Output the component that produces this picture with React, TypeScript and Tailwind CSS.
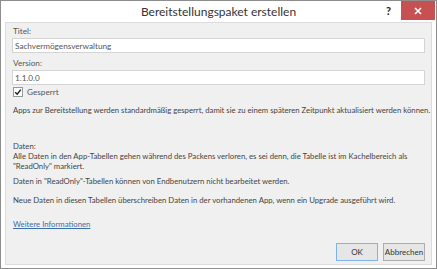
import React from 'react';

const font = { fontFamily: 'Lato, "Open Sans", Arial, sans-serif' };

export default function App() {
  return (
    <div
      className="w-[437px] h-[269px] bg-white border border-[#8d8d8d] flex flex-col text-[#444] overflow-hidden"
      style={font}
    >
      {/* title bar */}
      <div className="relative h-[21px] flex items-center justify-center shrink-0">
        <span className="text-[12px] text-[#333]">Bereitstellungspaket erstellen</span>
        <span className="absolute left-[385px] top-[2px] text-[11px] font-bold text-[#222]">?</span>
        <div className="absolute left-[400px] top-0 w-[34px] h-[19px] bg-[#c75050] flex items-center justify-center">
          <svg width="8" height="8" viewBox="0 0 8 8">
            <path d="M1 1L7 7M7 1L1 7" stroke="white" strokeWidth="1.6" />
          </svg>
        </div>
      </div>

      {/* content */}
      <div className="mx-[4px] mb-[3px] flex-1 min-h-0 border border-[#dcdcdc] bg-[#f0f0f0] px-[6px] flex flex-col text-[7.75px] leading-[10px] whitespace-nowrap">
        <div className="mt-[3px] ml-[1px] text-[#555] text-[8.2px]">Titel:</div>
        <div className="mt-[2px] h-[15px] bg-white border border-[#d4d4d4] flex items-center px-[2px] text-[#555] text-[8.2px]">
          Sachvermögensverwaltung
        </div>
        <div className="mt-[5px] ml-[1px] text-[#555] text-[8.2px]">Version:</div>
        <div className="mt-[2px] h-[15px] bg-white border border-[#d4d4d4] flex items-center px-[2px] text-[#555] text-[8.2px]">
          1.1.0.0
        </div>
        <div className="mt-[2px] flex items-center gap-[4px] ml-[1px]">
          <div className="w-[10px] h-[10px] border border-[#999] bg-white flex items-center justify-center">
            <svg width="8" height="8" viewBox="0 0 8 8">
              <path d="M1.2 4.2L3.2 6.2L6.8 1.6" stroke="#222" strokeWidth="1.5" fill="none" />
            </svg>
          </div>
          <span className="text-[#555] text-[8.2px]">Gesperrt</span>
        </div>
        <p className="mt-[8px] ml-[1px]">
          Apps zur Bereitstellung werden standardmäßig gesperrt, damit sie zu einem späteren Zeitpunkt aktualisiert werden können.
        </p>
        <p className="mt-[26px] ml-[1px]">Daten:</p>
        <p className="ml-[1px]">
          Alle Daten in den App-Tabellen gehen während des Packens verloren, es sei denn, die Tabelle ist im Kachelbereich als
          <br />
          "ReadOnly" markiert.
        </p>
        <p className="mt-[5px] ml-[1px]">Daten in "ReadOnly"-Tabellen können von Endbenutzern nicht bearbeitet werden.</p>
        <p className="mt-[9px] ml-[1px]">
          Neue Daten in diesen Tabellen überschreiben Daten in der vorhandenen App, wenn ein Upgrade ausgeführt wird.
        </p>
        <a className="mt-[14px] ml-[1px] text-[#3c6ea8] underline self-start">Weitere Informationen</a>
        <div className="mt-auto mb-[3px] flex justify-end gap-[5px]">
          <button className="w-[42px] h-[18px] bg-[#e6e6e6] border border-[#7eb4ea] text-[#333] text-[8px]">OK</button>
          <button className="w-[42px] h-[18px] bg-[#e6e6e6] border border-[#adadad] text-[#333] text-[8px]">Abbrechen</button>
        </div>
      </div>
    </div>
  );
}
